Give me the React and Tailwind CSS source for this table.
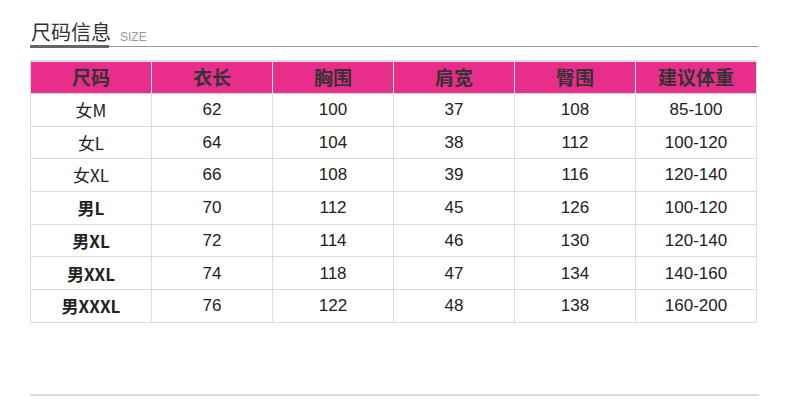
import React from "react";

const headers = ["尺码", "衣长", "胸围", "肩宽", "臀围", "建议体重"];
const rows = [
  ["女M", "62", "100", "37", "108", "85-100", false],
  ["女L", "64", "104", "38", "112", "100-120", false],
  ["女XL", "66", "108", "39", "116", "120-140", false],
  ["男L", "70", "112", "45", "126", "100-120", true],
  ["男XL", "72", "114", "46", "130", "120-140", true],
  ["男XXL", "74", "118", "47", "134", "140-160", true],
  ["男XXXL", "76", "122", "48", "138", "160-200", true],
];

export default function App() {
  return (
    <div
      className="w-[790px] h-[402px] bg-white pl-[30px] pt-[16px] text-[#222]"
      style={{ fontFamily: '"Liberation Sans", "Noto Sans CJK SC", sans-serif' }}
    >
      <div className="w-[728px] flex items-end border-b border-[#999] h-[31px]">
        <span
          className="text-[20px] leading-[26px] text-[#333] border-b-[3px] border-[#666] -mb-[2px] pl-[1px] w-[79px] whitespace-nowrap"
          style={{ fontFamily: '"Noto Sans CJK SC", sans-serif' }}
        >
          尺码信息
        </span>
        <span className="ml-[11px] mb-[2px] text-[12px] leading-[14px] text-[#999]">SIZE</span>
      </div>

      <div className="mt-[13px] w-[727px] border-t-2 border-[#dcdcdc] border-l border-l-[#dcdcdc]">
        <div className="grid grid-cols-[repeat(6,121px)] bg-[#e72e8b]">
          {headers.map((h) => (
            <div
              key={h}
              className="h-[32px] flex items-center justify-center border-r border-b border-r-[#e8e8e8] border-b-[#d6d6d6] text-[19px] font-bold text-[#333]"
              style={{ fontFamily: '"Noto Sans CJK SC", sans-serif' }}
            >
              {h}
            </div>
          ))}
        </div>
        {rows.map((r) => (
          <div key={r[0]} className="grid grid-cols-[repeat(6,121px)]">
            {r.slice(0, 6).map((c, i) => (
              <div
                key={i}
                className={`h-[32.7px] flex items-center justify-center border-r border-b border-[#dcdcdc] text-[17px] ${
                  i === 0 && r[6] ? "font-semibold" : ""
                }`}
                style={i === 0 ? { fontFamily: '"Noto Sans CJK SC", sans-serif' } : undefined}
              >
                {c}
              </div>
            ))}
          </div>
        ))}
      </div>

      <div className="mt-[71px] w-[729px] border-t-2 border-[#dcdcdc]" />
    </div>
  );
}
